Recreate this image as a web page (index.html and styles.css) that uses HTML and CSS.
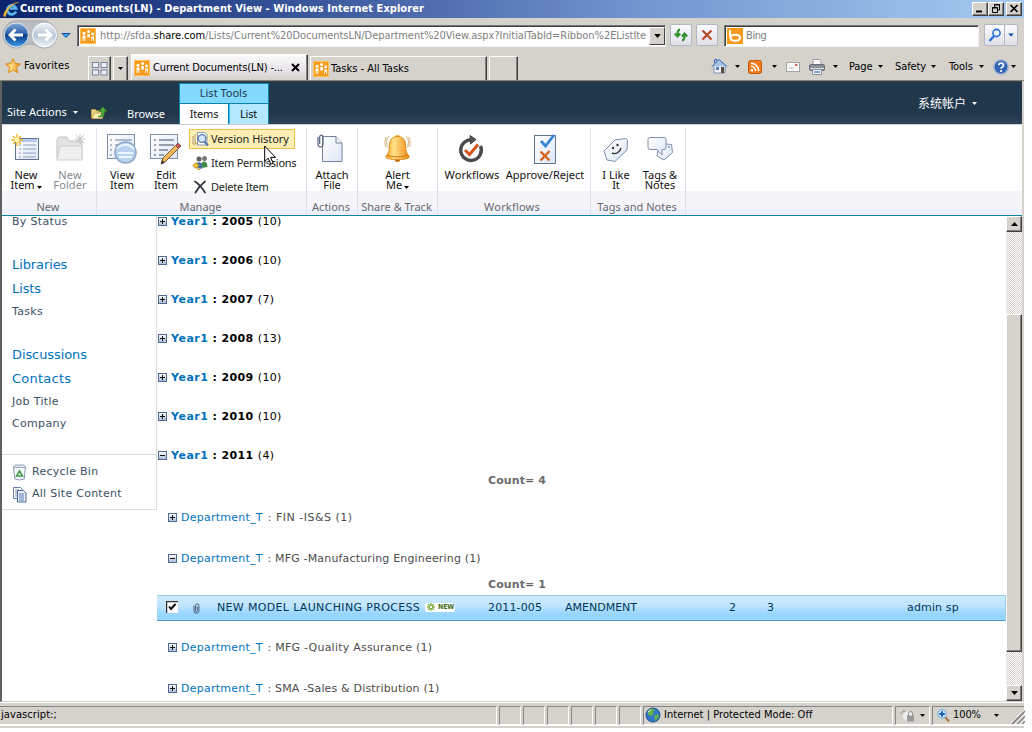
FILE: index.html
```html
<!DOCTYPE html>
<html lang="en">
<head>
<meta charset="utf-8">
<title>Current Documents(LN) - Department View</title>
<link rel="stylesheet" href="styles.css">
</head>
<body>
<svg class="defs" width="0" height="0" aria-hidden="true">
  <defs>
    <linearGradient id="blue" x1="0" y1="0" x2="0" y2="1"><stop offset="0" stop-color="#7fa8d8"/><stop offset=".45" stop-color="#2e5fa8"/><stop offset=".5" stop-color="#0b3a85"/><stop offset="1" stop-color="#3f9be8"/></linearGradient>
    <linearGradient id="pale" x1="0" y1="0" x2="0" y2="1"><stop offset="0" stop-color="#f2f5f9"/><stop offset=".5" stop-color="#b9c6d6"/><stop offset="1" stop-color="#eef3f8"/></linearGradient>
    <linearGradient id="gold" x1="0" y1="0" x2="1" y2="0"><stop offset="0" stop-color="#f3a01c"/><stop offset=".35" stop-color="#ffe08a"/><stop offset="1" stop-color="#ee8a10"/></linearGradient>
    <linearGradient id="sheet" x1="0" y1="0" x2="1" y2="1"><stop offset="0" stop-color="#fff"/><stop offset="1" stop-color="#dce6f6"/></linearGradient>
    <linearGradient id="box" x1="0" y1="0" x2="0" y2="1"><stop offset="0" stop-color="#fff"/><stop offset="1" stop-color="#a9b9d6"/></linearGradient>
    <symbol id="site" viewBox="0 0 16 16"><rect width="16" height="16" rx="1.5" fill="#f59a1b"/><rect x=".5" y=".5" width="15" height="15" rx="1" fill="none" stroke="#ffc05a"/><g fill="#fff"><circle cx="8.600" cy="3.500" r="1.500"/><circle cx="4" cy="5.300" r="1.500"/><circle cx="12.600" cy="6" r="1.400"/><path d="M2.500 7.500h3V13h-3zM7.300 6h2.600v3.500H7.300zM11.300 8.500h2.700V13h-2.700z"/></g><path d="M4 10v4M12.600 10.500v3.500M6.500 9.500v4h4v-4" stroke="#f59a1b" fill="none"/></symbol>
    <symbol id="plus" viewBox="0 0 9 9"><rect x=".5" y=".5" width="8" height="8" fill="url(#box)" stroke="#50698f"/><path d="M2 4.500h5M4.500 2v5" stroke="#111"/></symbol>
    <symbol id="minus" viewBox="0 0 9 9"><rect x=".5" y=".5" width="8" height="8" fill="url(#box)" stroke="#50698f"/><path d="M2 4.500h5" stroke="#111"/></symbol>
    <symbol id="down" viewBox="0 0 5 3"><path d="M0 0h5L2.500 3z" fill="currentColor"/></symbol>
    <symbol id="clip" viewBox="0 0 7 11"><path d="M1 2.500v5.300a2.400 2.400 0 0 0 4.900 0V2.600a1.700 1.700 0 0 0-3.400 0v5a.9.9 0 0 0 1.800 0V3.500" fill="none" stroke="#4a5a78"/></symbol>
  </defs>
</svg>

<div class="window">
  <header class="titlebar">
    <svg class="ie" width="17" height="17" viewBox="0 0 17 17"><path d="M13 10.500a4.500 4.500 0 1 1 .1-3H6.500" fill="none" stroke="#59b6f5" stroke-width="2.600"/><path d="M1 15.500C-1 12 8 1 15.500 1.500c-4 0-12 6-13 14z" fill="#f6c445" stroke="#e7a617" stroke-width=".5"/></svg>
    <h1 class="title">Current Documents(LN) - Department View - Windows Internet Explorer</h1>
    <div class="winbtns">
      <span class="wb"><svg width="10" height="9"><path d="M1 7.500h6" stroke="#000" stroke-width="2"/></svg></span>
      <span class="wb"><svg width="10" height="9"><path d="M3.500 3V.5h5V6H7M3 1h6" fill="none" stroke="#000"/><path d="M1.500 3.500h5v5h-5zM1 4h6" fill="none" stroke="#000"/></svg></span>
      <span class="wb wb-close"><svg width="10" height="9"><path d="M1.500 1l7 7M8.500 1l-7 7" stroke="#000" stroke-width="1.700"/></svg></span>
    </div>
  </header>

  <div class="navrow">
    <svg class="backfwd" width="74" height="30" viewBox="0 0 74 30">
      <path d="M15 1h27c8 0 14 7 14 14s-5 13-13 13c-6 0-7-4-14-4s-8 4-14 4C8 28 2 22 2 15S8 1 15 1z" fill="#b9bcc2" stroke="#a4a7ad"/>
      <circle cx="15.300" cy="15" r="12" fill="url(#blue)" stroke="#dfe7f2"/><path d="M22 15H9.500M14.500 9.500L9 15l5.500 5.500" fill="none" stroke="#fff" stroke-width="2.800"/>
      <circle cx="43.500" cy="15" r="12" fill="url(#pale)" stroke="#fff"/><path d="M37 15h12.500M44.500 9.500L50 15l-5.500 5.500" fill="none" stroke="#fff" stroke-width="2.800"/>
      <path d="M61 13.500h8l-4 4z" fill="#3aa2ea" stroke="#1552a0"/>
    </svg>
    <div class="address sunk">
      <svg width="16" height="16"><use href="#site"/></svg>
      <span class="url">http://sfda.<b>share.com</b>/Lists/Current%20DocumentsLN/Department%20View.aspx?InitialTabId=Ribbon%2EListIte</span>
      <span class="combo"><svg width="7" height="4" viewBox="0 0 5 3"><use href="#down"/></svg></span>
    </div>
    <span class="sqbtn refresh"><svg width="16" height="16" viewBox="0 0 16 16"><path d="M7 2.500C4.500 3 4.500 5 4.500 8M1.800 6.500l2.700 3 2.700-3M9 13.500c2.500-.5 2.500-2.500 2.500-5.500M8.800 9.500l2.700-3 2.700 3" fill="none" stroke="#2f8f2b" stroke-width="2"/></svg></span>
    <span class="sqbtn stop"><svg width="12" height="12" viewBox="0 0 12 12"><path d="M1.500 1.500l9 9M10.500 1.500l-9 9" stroke="#b8472a" stroke-width="2.200"/></svg></span>
    <div class="search sunk">
      <svg width="16" height="16" viewBox="0 0 16 16"><rect width="16" height="16" fill="#f79a1c"/><path d="M3 2v6.500M3.500 9.800c0-1.800 2-3 4.500-3s5 1 5 3-2.400 3-5 3-4.500-1.200-4.500-3z" fill="none" stroke="#fff" stroke-width="2"/></svg>
      <span>Bing</span>
    </div>
    <span class="sqbtn go"><svg width="14" height="14" viewBox="0 0 14 14"><circle cx="8.500" cy="5" r="3.600" fill="#e4f1ff" stroke="#2f6fd8" stroke-width="1.600"/><path d="M6 8l-4.500 5" stroke="#2f6fd8" stroke-width="2.400"/></svg></span>
    <span class="sqbtn godown"><svg width="6" height="4" viewBox="0 0 5 3"><use href="#down"/></svg></span>
  </div>

  <div class="tabrow">
    <div class="fav"><svg width="16" height="16" viewBox="0 0 16 16"><path d="M8 .8l2.100 4.700 5.200.5-3.900 3.500 1.200 5.200L8 12l-4.600 2.700 1.200-5.200L.7 6l5.200-.5z" fill="url(#gold)" stroke="#d98a12"/></svg><span>Favorites</span></div>
    <span class="raised quick"><svg width="16" height="14" viewBox="0 0 16 14"><g fill="#e9edf6" stroke="#7a859e"><rect x=".5" y=".5" width="6" height="5"/><rect x="9" y=".5" width="6" height="5"/><rect x=".5" y="8" width="6" height="5"/><rect x="9" y="8" width="6" height="5"/></g></svg></span>
    <span class="raised quickdown"><svg width="5" height="3"><use href="#down"/></svg></span>
    <div class="raised tab active"><svg width="16" height="16"><use href="#site"/></svg><span class="t">Current Documents(LN) -...</span><svg class="x" width="9" height="9"><path d="M1 1l7 7M8 1L1 8" stroke="#000" stroke-width="2"/></svg></div>
    <div class="raised tab second"><svg width="16" height="16"><use href="#site"/></svg><span class="t">Tasks - All Tasks</span></div>
    <div class="raised newtab"></div>
    <div class="commands">
      <svg width="17" height="17" viewBox="0 0 17 17"><path d="M3 7.500V15h11V7.500" fill="#eef2f8" stroke="#7b8fb0"/><path d="M1 8.500l7-7 8 7M3.500 5V1.500H6V3" fill="#a9c2ea" stroke="#3b63a8"/><path d="M5 9h3v3H5z" fill="#4f7fc8"/><path d="M10 9h3v6h-3z" fill="#5a4b3c"/></svg>
      <svg class="ar a1" width="5" height="3"><use href="#down"/></svg>
      <svg class="rss" width="14" height="14" viewBox="0 0 14 14"><rect x=".5" y=".5" width="13" height="13" rx="2" fill="#ef7d1d" stroke="#c65a0a"/><circle cx="4" cy="10.300" r="1.300" fill="#fff"/><path d="M3 6.300a4.700 4.700 0 0 1 4.700 4.700M3 3.300a7.700 7.700 0 0 1 7.700 7.700" fill="none" stroke="#fff" stroke-width="1.500"/></svg>
      <svg class="ar a4" width="5" height="3"><use href="#down"/></svg>
      <svg class="mail" width="14" height="10" viewBox="0 0 14 10"><rect x=".5" y=".5" width="13" height="9" fill="#f7f7f7" stroke="#a5a5a5"/><path d="M9 2h2.500v2H9z" fill="#c66"/><path d="M2.500 6h5" stroke="#bbb"/></svg>
      <svg class="print" width="16" height="16" viewBox="0 0 16 16"><path d="M4 6V.5h6l2 2V6" fill="#fff" stroke="#999"/><rect x=".5" y="5.500" width="15" height="6" rx="1.500" fill="#8b8f97" stroke="#6a6d74"/><path d="M1 9.500h14" stroke="#d9dce2"/><path d="M3.500 10.500h9v5h-9z" fill="#f2f5fa" stroke="#8a8d94"/><path d="M5 12h6v2H5z" fill="#7fa2d8"/></svg>
      <svg class="ar a2" width="5" height="3"><use href="#down"/></svg>
      <span class="cmd cmd-page">Page</span><svg class="ar" width="5" height="3"><use href="#down"/></svg>
      <span class="cmd safety">Safety</span><svg class="ar" width="5" height="3"><use href="#down"/></svg>
      <span class="cmd tools">Tools</span><svg class="ar" width="5" height="3"><use href="#down"/></svg>
      <svg class="help" width="16" height="16" viewBox="0 0 16 16"><circle cx="8" cy="8" r="7" fill="#2f62b5" stroke="#93a9cf" stroke-width="1.500"/><path d="M5.700 6.300c0-3 4.800-3 4.800 0 0 1.700-2.400 1.700-2.400 3.500M8.100 11v2" fill="none" stroke="#fff" stroke-width="1.700"/></svg><svg class="ar a3" width="5" height="3"><use href="#down"/></svg>
    </div>
  </div>

  <div class="page">
    <div class="sptop">
      <span class="siteactions">Site Actions</span><svg class="ar" width="5" height="3"><use href="#down"/></svg>
      <svg class="upfolder" width="16" height="15" viewBox="0 0 16 15"><path d="M.5 13V4.500h4l1 1.500h6V13z" fill="#e9d58a" stroke="#b79a45"/><path d="M1 13.500L3.500 8H13l-2 5.500z" fill="#fbf0b8" stroke="#c2a654"/><path d="M7 11.500c3 0 4-2 3.700-5H8.300L12 1.800l3.600 4.700h-2.300c.2 4-2 6.500-6.300 5z" fill="#4fae3e" stroke="#2c7d22" stroke-width=".8"/></svg>
      <span class="browse">Browse</span>
      <div class="context"><div class="ctitle">List Tools</div><div class="ctabs"><span class="ct on">Items</span><span class="ct off">List</span></div></div>
      <span class="user">系统帐户</span><svg class="ar userar" width="5" height="3"><use href="#down"/></svg>
    </div>

    <div class="ribbon">
      <section class="group g-new">
        <div class="btns">
          <div class="big"><svg width="32" height="32" viewBox="0 0 32 32"><rect x="5.500" y="5.500" width="23" height="21" fill="url(#sheet)" stroke="#62758f"/><path d="M8 7.500h19" stroke="#b7c9e6" stroke-width="3"/><path d="M9 12h2M9 16h2M9 20h2M9 24h2M13 12h13M13 16h13M13 20h13M13 24h13" stroke="#8fa0bc"/><path d="M7 1v12M1 7h12M3 3l8 8M11 3l-8 8" stroke="#f3b529" stroke-width="1.500"/><circle cx="7" cy="7" r="2.400" fill="#fff3a8"/></svg><span>New<br>Item <svg class="ar" width="5" height="3"><use href="#down"/></svg></span></div>
          <div class="big dim"><svg width="32" height="32" viewBox="0 0 32 32"><path d="M3 26V7l2-3h8l2 4h13v18z" fill="#e3e3e5" stroke="#c3c3c6"/><path d="M3 27l3-14h22v14z" fill="#efeff0" stroke="#cfcfd2"/><path d="M26 1v10M21 6h10M22 2l8 8M30 2l-8 8" stroke="#c2c2c2"/></svg><span>New<br>Folder</span></div>
        </div><h2>New</h2>
      </section>
      <section class="group g-manage">
        <div class="btns">
          <div class="big"><svg width="32" height="32" viewBox="0 0 32 32"><rect x="1.500" y="1.500" width="27" height="24" fill="url(#sheet)" stroke="#8191a9"/><path d="M4 7h2M4 12h2M4 17h2M4 22h2M9 7h17M9 12h17M9 17h10M9 22h10" stroke="#6b7f9e"/><circle cx="19.500" cy="19.500" r="10.500" fill="#b9d3ee" stroke="#8fa6c4" stroke-width="1.500"/><path d="M11 16c3-5 12-6 17 0M12 20h15M13 24h13" stroke="#edf5fd" stroke-width="2" fill="none"/></svg><span>View<br>Item</span></div>
          <div class="big"><svg width="32" height="32" viewBox="0 0 32 32"><rect x=".5" y="1.500" width="27" height="24" fill="url(#sheet)" stroke="#8191a9"/><path d="M4 7h2M4 12h2M4 17h2M4 22h2M9 7h15M9 12h15M9 17h9M9 22h5" stroke="#3f4d66"/><path d="M11 31l2-6 13-13 3 3-13 13z" fill="#f2b75a" stroke="#7d5a2c"/><path d="M25.500 12.500l2.500-2.500 3 3-2.500 2.500z" fill="#c9584c" stroke="#7d5a5c"/><path d="M11 31l1-4 3 3z" fill="#333"/></svg><span>Edit<br>Item</span></div>
          <div class="smalls">
            <div class="small hot"><svg width="17" height="16" viewBox="0 0 17 16"><path d="M1 5v8h3M3 3v9h3" fill="#fff6dd" stroke="#b89a5a"/><path d="M5.500 1.500h7l2.500 2V14H5.500z" fill="#fff" stroke="#8a97ad"/><circle cx="10" cy="7.500" r="3.800" fill="#d3e6f9" stroke="#5978a8" stroke-width="1.300"/><path d="M12.500 10.500l3.500 4" stroke="#5978a8" stroke-width="2"/></svg><span>Version History</span></div>
            <div class="small tight"><svg width="17" height="16" viewBox="0 0 17 16"><circle cx="7" cy="4" r="2.500" fill="#5f5f5f"/><circle cx="12.500" cy="3.500" r="2.500" fill="#7c7c7c"/><path d="M3.500 12c0-6 6-6 6.500-2v4z" fill="#3e6db5"/><path d="M9.500 13V8c3-3 6-1 6 4z" fill="#3f8a48"/><path d="M1 10.500l3-3 3 3-3 3zM5 12l3 3M7 13l-1.500 2" fill="#f6c945" stroke="#b98310"/></svg><span>Item Permissions</span></div>
            <div class="small tight"><svg width="17" height="16" viewBox="0 0 17 16"><path d="M3 2.500c3 2 7 6 10 11M13 2.500c-4 3-7 6.500-9.500 11" fill="none" stroke="#333a45" stroke-width="1.800" stroke-linecap="round"/></svg><span>Delete Item</span></div>
          </div>
        </div><h2>Manage</h2>
      </section>
      <section class="group g-actions"><div class="btns"><div class="big"><svg width="32" height="32" viewBox="0 0 32 32"><path d="M6.500 3.500H20l6 6.500v18.500H6.500z" fill="url(#sheet)" stroke="#74839b"/><path d="M20 3.500V10h6" fill="#edf2fa" stroke="#74839b"/><path d="M2 4v7.500a2.500 2.500 0 0 0 5 0V3.500a1.700 1.700 0 0 0-3.300 0V11" fill="none" stroke="#56657e" stroke-width="1.200"/></svg><span>Attach<br>File</span></div></div><h2>Actions</h2></section>
      <section class="group g-share"><div class="btns"><div class="big"><svg width="32" height="32" viewBox="0 0 32 32"><path d="M7 3c-3 3-3 8-1 12M4.500 4c-2 3-2 7-.5 10M24 3c3 3 3 8 1 12M26.500 4c2 3 2 7 .5 10" fill="none" stroke="#d4b276"/><circle cx="15.500" cy="26" r="3" fill="#c87512"/><circle cx="15.500" cy="4" r="2.300" fill="#f5b030"/><path d="M15.500 3.500c-6 0-8 4-8 9 0 5-1 8-4 11.500 2 3.500 22 3.500 24 0-3-3.500-4-6.500-4-11.500 0-5-2-9-8-9z" fill="url(#gold)" stroke="#d98b18"/><path d="M5 22c4 2.500 17 2.500 21 0" stroke="#c97b12" fill="none"/></svg><span>Alert<br>Me <svg class="ar" width="5" height="3"><use href="#down"/></svg></span></div></div><h2>Share &amp; Track</h2></section>
      <section class="group g-work"><div class="btns">
        <div class="big"><svg width="32" height="32" viewBox="0 0 32 32"><path d="M17 7a10.300 10.300 0 1 0 7.500 6" fill="none" stroke="#4a4a4c" stroke-width="3.400"/><path d="M14 2.500L20 6.500l-5.500 4.500z" fill="#555" stroke="#444"/><path d="M9 17l4.500 4.500L22 11.500" fill="none" stroke="#d7541c" stroke-width="3"/></svg><span>Workflows</span></div>
        <div class="big"><svg width="32" height="32" viewBox="0 0 32 32"><rect x="5.500" y="2.500" width="21" height="28" fill="url(#sheet)" stroke="#62758f"/><path d="M12 8l4.500 5L25 2" fill="none" stroke="#3d86d6" stroke-width="2.800"/><path d="M11.500 18.500l9 9M20.500 18l-9 9.500" stroke="#d86020" stroke-width="2.400"/></svg><span>Approve/Reject</span></div>
      </div><h2>Workflows</h2></section>
      <section class="group g-tags"><div class="btns">
        <div class="big"><svg width="32" height="32" viewBox="0 0 32 32"><path d="M4 18L15 7l10.500-1.500 2 1.500-.5 10L15 28.500 7 27z" fill="url(#sheet)" stroke="#7f8fae"/><circle cx="13" cy="15" r="1.200" fill="#333"/><circle cx="17.500" cy="12" r="1.200" fill="#333"/><path d="M12 20c4 2 8-1 9-5" fill="none" stroke="#333" stroke-width="1.400"/></svg><span>I Like<br>It</span></div>
        <div class="big"><svg width="32" height="32" viewBox="0 0 32 32"><path d="M14 15l8-4 5.500.5 1 8L20 27l-7-4z" fill="url(#sheet)" stroke="#7f8fae"/><path d="M6 4.500h14q2 0 2 2v8q0 2-2 2h-2V22l-5-5.500H6q-2 0-2-2v-8q0-2 2-2z" fill="url(#sheet)" stroke="#8291ae"/><circle cx="25" cy="14" r="1" fill="#7f8fae"/></svg><span>Tags &amp;<br>Notes</span></div>
      </div><h2>Tags and Notes</h2></section>
      <div class="groupfill"></div>
      <svg class="cursor" width="13" height="21" viewBox="0 0 13 21"><path d="M.7 1v15.500l3.500-3.300 2.600 6 2.400-1-2.600-5.800h4.900z" fill="#fff" stroke="#000"/></svg>
    </div>

    <div class="body">
      <aside class="side">
        <nav class="links">
          <a class="item">By Status</a>
          <a class="head gap">Libraries</a>
          <a class="head">Lists</a>
          <a class="item">Tasks</a>
          <a class="head gap2">Discussions</a>
          <a class="head wide">Contacts</a>
          <a class="item">Job Title</a>
          <a class="item">Company</a>
        </nav>
        <div class="tools2">
          <a class="tool"><svg width="15" height="17" viewBox="0 0 15 17"><path d="M1.500 3h12l-1.300 12q-4.700 2-9.400 0z" fill="#f4f7fb" stroke="#8b9bb5"/><path d="M1 3.500L3 1h9l2 2.500z" fill="#dfe6f0" stroke="#9aa7bd"/><path d="M7.500 7l3 5h-6z" fill="none" stroke="#3e9a42" stroke-width="1.500"/></svg><span>Recycle Bin</span></a>
          <a class="tool"><svg width="15" height="17" viewBox="0 0 15 17"><path d="M1.500 1.500h7l2 2v9h-9z" fill="#fff" stroke="#667ea8"/><path d="M3 4h4M3 6h3M3 8h3M3 10h3" stroke="#7f95bb"/><path d="M5.500 4.500h6l2.500 2.500v9H5.500z" fill="#e7effb" stroke="#4d6796"/><path d="M7 8h5M7 10h5M7 12h5M7 14h5" stroke="#5c7db5"/></svg><span>All Site Content</span></a>
        </div>
      </aside>
      <main class="list">
        <div class="year"><svg width="9" height="9"><use href="#plus"/></svg><span><a>Year1</a> : 2005 <i>(10)</i></span></div>
        <div class="year"><svg width="9" height="9"><use href="#plus"/></svg><span><a>Year1</a> : 2006 <i>(10)</i></span></div>
        <div class="year"><svg width="9" height="9"><use href="#plus"/></svg><span><a>Year1</a> : 2007 <i>(7)</i></span></div>
        <div class="year"><svg width="9" height="9"><use href="#plus"/></svg><span><a>Year1</a> : 2008 <i>(13)</i></span></div>
        <div class="year"><svg width="9" height="9"><use href="#plus"/></svg><span><a>Year1</a> : 2009 <i>(10)</i></span></div>
        <div class="year"><svg width="9" height="9"><use href="#plus"/></svg><span><a>Year1</a> : 2010 <i>(10)</i></span></div>
        <div class="year"><svg width="9" height="9"><use href="#minus"/></svg><span><a>Year1</a> : 2011 <i>(4)</i></span></div>
        <div class="count">Count= 4</div>
        <div class="dept first"><svg width="9" height="9"><use href="#plus"/></svg><span><a>Department_T</a> : FIN -IS&amp;S (1)</span></div>
        <div class="dept"><svg width="9" height="9"><use href="#minus"/></svg><span><a>Department_T</a> : MFG -Manufacturing Engineering (1)</span></div>
        <div class="count">Count= 1</div>
        <div class="row">
          <svg class="check" width="12" height="12"><rect width="12" height="12" fill="#fff"/><path d="M.5 12V.5H12" fill="none" stroke="#333" stroke-width="1.500"/><path d="M3 5.500l2 2.500 4.500-5" fill="none" stroke="#000" stroke-width="1.900"/></svg>
          <svg class="att" width="7" height="11"><use href="#clip"/></svg>
          <span class="c-title">NEW MODEL LAUNCHING PROCESS</span>
          <span class="new"><svg width="8" height="8"><path d="M0 4h8M4 0v8M1 1l6 6M7 1L1 7" stroke="#7cb342" stroke-width="1.400"/><path d="M3 3h2v2H3z" fill="#fff"/></svg>NEW</span>
          <span class="c-no">2011-005</span>
          <span class="c-type">AMENDMENT</span>
          <span class="c-a">2</span>
          <span class="c-b">3</span>
          <span class="c-user">admin sp</span>
        </div>
        <div class="dept after"><svg width="9" height="9"><use href="#plus"/></svg><span><a>Department_T</a> : MFG -Quality Assurance (1)</span></div>
        <div class="dept"><svg width="9" height="9"><use href="#plus"/></svg><span><a>Department_T</a> : SMA -Sales &amp; Distribution (1)</span></div>
      </main>
      <div class="scroll">
        <span class="raised sb"><svg width="7" height="4"><path d="M0 4h7L3.500 0z"/></svg></span>
        <span class="raised thumb"></span>
        <span class="raised sb bottom"><svg width="7" height="4"><path d="M0 0h7L3.500 4z"/></svg></span>
      </div>
    </div>
  </div>

  <footer class="status">
    <span class="cell msg">javascript:;</span>
    <span class="cell s"></span><span class="cell s"></span><span class="cell s"></span><span class="cell s"></span><span class="cell s"></span><span class="cell s"></span>
    <span class="cell zone"><svg width="16" height="16" viewBox="0 0 16 16"><circle cx="8" cy="8" r="7" fill="#2f77c9" stroke="#1c4c8c"/><path d="M3 4c2-3 6-3 7-1L8 5l1 2-3 2-3-1zM9 9l4-2 1 3-4 4z" fill="#5fb04d"/><path d="M3 5l3-2" stroke="#dff0ff"/></svg><span>Internet | Protected Mode: Off</span></span>
    <span class="cell prot"><svg width="16" height="14" viewBox="0 0 16 14"><path d="M1 6l4-4v2c4-1 6 0 7 3" fill="#c9c9c9" stroke="#a2a2a2"/><circle cx="9" cy="8" r="5" fill="#efefef"/><rect x="8" y="7.500" width="7" height="6" fill="#999"/><path d="M9.500 8V5.500a2 2 0 0 1 4 0V8" fill="none" stroke="#888"/></svg><svg class="ar" width="5" height="3"><use href="#down"/></svg></span>
    <span class="cell zoom"><svg width="13" height="13" viewBox="0 0 13 13"><circle cx="5" cy="5" r="4.300" fill="#d6ebff" stroke="#6d9fd8"/><path d="M5 2.200v5.600M2.200 5h5.600" stroke="#1560c0" stroke-width="2"/><path d="M8.500 8.500l3.500 4" stroke="#a8763e" stroke-width="2"/></svg><span>100%</span><svg class="ar" width="5" height="3"><use href="#down"/></svg><svg class="grip" width="14" height="14"><path d="M1 14L14 1M6 14l8-8M11 14l3-3" stroke="#808080" stroke-width="1.600"/><path d="M0 13L13 0M4.500 14L14 4.500M9.500 14L14 9.500" stroke="#fff"/></svg></span>
  </footer>
</div>
</body>
</html>
```

FILE: styles.css
```css
* { box-sizing: border-box; }
body { margin: 0; background: #fff; overflow: hidden; }
svg { display: block; flex: none; }
.defs { position: absolute; }
.window { width: 1024px; height: 728px; display: flex; flex-direction: column; background: #d5d2cc; color: #000; font: 11px/14px "DejaVu Sans Condensed", "DejaVu Sans", sans-serif; letter-spacing: 0; white-space: nowrap; }
.window span, .window a { flex: none; }
.ar { color: #000; }

.titlebar { height: 18px; display: flex; align-items: center; padding: 0 2px 0 3px; background: linear-gradient(90deg, #0b246b 0%, #3d5a9f 32%, #7394ce 62%, #a6caf0 100%); }
.title { margin: 0; flex: 1; color: #fff; font-size: 11px; font-weight: bold; letter-spacing: 0.04px; }
.winbtns { display: flex; margin-top: -1px; }
.wb { width: 16px; height: 14px; display: grid; place-items: center; background: #d5d2cc; border: 1px solid; border-color: #fff #404040 #404040 #fff; box-shadow: inset -1px -1px #808080; }
.wb-close { margin-left: 2px; }

.navrow { height: 34px; display: flex; align-items: center; }
.backfwd { margin: 0 2px 0 1px; }
.sunk { height: 22px; display: flex; align-items: center; background: #fff; border: 1px solid; border-color: #777 #f4f2ee #f4f2ee #777; box-shadow: inset 1px 1px #404040; color: #808080; }
.address { width: 589px; margin-top: 1px; padding-left: 2px; margin-right: 4px; }
.url { width: 552px; margin-left: 4px; letter-spacing: -0.05px; overflow: hidden; }
.url b { font-weight: normal; color: #000; }
.combo { width: 16px; height: 18px; display: grid; place-items: center; background: #d5d2cc; border: 1px solid; border-color: #fff #404040 #404040 #fff; color: #000; margin-left: -3px; }
.sqbtn { height: 22px; width: 22px; display: grid; place-items: center; border: 1px solid #b3b7c4; border-radius: 2px; background: linear-gradient(#fbfbfd, #dfe1ea); }
.refresh { margin-right: 4px; }
.search { width: 255px; margin: 1px 5px 0 6px; padding-left: 2px; gap: 3px; letter-spacing: -0.4px; }
.go { border-radius: 2px 0 0 2px; width: 21px; }
.godown { width: 13px; border-left: 0; color: #1b4fae; }

.tabrow { height: 29px; display: flex; align-items: flex-end; border-bottom: 1px solid #808080; }
.fav { width: 84px; display: flex; align-items: center; gap: 3px; padding-left: 5px; height: 28px; letter-spacing: 0.1px; }
.raised { background: #d5d2cc; border: 1px solid; border-color: #fff #404040 #404040 #fff; box-shadow: inset -1px -1px #808080; }
.tabrow .raised { border-bottom: 0; box-shadow: inset -1px 0 #808080; }
.quick { width: 23px; height: 24px; margin-left: 4px; display: grid; place-items: center; }
.quickdown { width: 15px; height: 24px; margin: 0 3px 0 2px; display: grid; place-items: center; }
.tab { display: flex; align-items: center; padding-left: 2px; }
.tab .t { margin-left: 3px; }
.tab.active { width: 177px; height: 26px; background: linear-gradient(#fbfafa, #e8e4ea 60%, #d5d2cc); }
.tab.active .t { width: 138px; letter-spacing: -0.14px; }
.tab.second { width: 177px; height: 24px; margin-left: 2px; }
.tab.second .t { margin-left: 2px; letter-spacing: 0; }
.newtab { width: 29px; height: 24px; margin-left: 2px; }
.commands { flex: 1; height: 27px; display: flex; align-items: center; padding-left: 193px; }
.a1 { margin-left: 7px; }
.rss { margin-left: 8px; }
.a4 { margin-left: 10px; }
.mail, .print, .help { margin-left: 9px; }
.a2 { margin-left: 8px; }
.cmd { margin-left: 11px; letter-spacing: -0.1px; }
.cmd-page { width: 29px; }
.safety { width: 36px; margin-left: 12px; }
.tools { width: 30px; margin-left: 13px; }
.a3 { margin-left: 2px; }

.page { width: 1024px; height: 621px; border-left: 2px solid #606060; border-right: 2px solid #d5d2cc; border-bottom: 1px solid #d5d2cc; background: #fff; }
.sptop { height: 43px; padding-left: 5px; display: flex; background: linear-gradient(#21374c 0 75%, #304258 100%); border-top: 1px solid #404040; color: #fff; font-family: "Noto Sans", sans-serif; }
.siteactions { margin-top: 23px; width: 66px; }
.sptop .ar { color: #fff; margin-top: 29px; }
.upfolder { margin: 23px 0 0 13px; }
.browse { margin: 25px 14px 0 20px; width: 38px; }
.context { width: 90px; margin-top: 1px; height: 41px; border: 1px solid #0b83ab; border-bottom: 0; background: #84d9ff; color: #21374c; display: flex; flex-direction: column; }
.ctitle { height: 19px; text-align: center; line-height: 17px; padding-right: 1px; }
.ctabs { flex: 1; display: flex; border-top: 1px solid #0b83ab; }
.ct { text-align: center; line-height: 20px; color: #111; letter-spacing: -0.2px; }
.on { width: 48px; background: #fff; }
.off { width: 40px; background: #b4e8ff; border-left: 1px solid #0b83ab; box-shadow: inset 1px 0 #35bdf0; }
.user { margin: 13px 0 0 649px; font: 12px/16px "Noto Sans CJK SC", sans-serif; width: 50px; }
.sptop .userar { margin: 20px 0 0 4px; }

.ribbon { position: relative; height: 92px; border-top: 1px solid #c9d0dc; border-bottom: 1px solid #0b83ab; display: flex; padding-top: 3px; font-family: "Noto Sans", sans-serif; background: linear-gradient(#fff 66px, #f5f4f8 66px 84px, #edf0f8 84px); }
.group { border-right: 1px solid #dfe2ee; display: flex; flex-direction: column; }
.btns { height: 64px; display: flex; }
.group h2 { margin: 8px 0 0; padding-right: 2px; text-align: center; font-size: 11px; font-weight: normal; line-height: 14px; color: #66696f; }
.g-new { width: 95px; } .g-manage { width: 210px; } .g-actions { width: 51px; } .g-share { width: 80px; } .g-work { width: 153px; } .g-tags { width: 95px; }
.group.g-work h2 { padding-right: 4px; letter-spacing: 0.2px; }
.groupfill { flex: 1; }
.big { width: 44px; display: flex; flex-direction: column; align-items: center; padding-top: 5px; text-align: center; line-height: 10px; color: #111; }
.big > svg { margin-bottom: 5px; }
.big span .ar { display: inline-block; vertical-align: 0; margin-left: -1px; }
.big.dim { color: #858a91; letter-spacing: 0.1px; }
.g-new .btns { padding-left: 2px; }
.g-manage .btns { padding-left: 3px; }
.g-actions .big, .g-share .big { width: 100%; }
.g-work .btns { padding-left: 4px; } .g-work .big { width: 60px; } .g-work .big + .big { width: 86px; }
.g-work .big:first-child { letter-spacing: 0.1px; }
.g-tags .btns { padding-left: 3px; }
.smalls { display: flex; flex-direction: column; gap: 4px; margin: 1px 0 0 1px; }
.small { height: 20px; flex: none; width: 107px; padding-left: 3px; display: flex; align-items: center; gap: 2px; color: #222; }
.small.hot { width: 106px; background: #fdeeb3; border: 1px solid #f0c04a; padding-left: 2px; letter-spacing: -0.05px; }
.small.tight { letter-spacing: -0.27px; }
.cursor { position: absolute; left: 262px; top: 20px; }

.body { height: 485px; display: flex; overflow: hidden; font-family: "DejaVu Sans", sans-serif; }
.side { width: 155px; height: 294px; border-right: 1px solid #dbddde; border-bottom: 1px solid #dbddde; color: #3b4f65; }
.links { height: 239px; border-bottom: 1px solid #dbddde; padding: 0 0 0 10px; display: flex; flex-direction: column; }
.item { line-height: 22px; margin-top: -5px; margin-bottom: 5px; letter-spacing: 0.32px; }
.head { line-height: 24px; font-size: 13px; color: #0072bc; margin-top: -5px; margin-bottom: 5px; letter-spacing: -0.1px; }
.head.wide { letter-spacing: 0.25px; }
.gap, .gap2 { margin-top: 15px; }
.tools2 { padding: 6px 0 0 10px; }
.tool { display: flex; align-items: center; height: 22px; gap: 5px; letter-spacing: 0.27px; }
.list { width: 849px; color: #4c4c4c; }
.year { height: 39px; display: flex; align-items: center; padding-left: 1px; gap: 4px; font-weight: bold; color: #000; letter-spacing: 0.35px; }
.year:first-child { margin-top: -14px; }
.year a { letter-spacing: 0.5px; }
.year i { font-style: normal; font-weight: normal; }
.list a { color: #0072bc; }
.count { height: 12px; line-height: 12px; padding-left: 331px; font-weight: bold; color: #6c6c6c; letter-spacing: 0.1px; }
.dept { height: 41px; display: flex; align-items: center; padding-left: 11px; gap: 4px; letter-spacing: 0.17px; }
.dept a { letter-spacing: 0.25px; margin-right: 1px; word-spacing: 1px; }
.dept.first { margin-top: 10px; letter-spacing: 0.5px; }
.dept + .count { margin-bottom: 4px; }
.row { height: 26px; display: flex; align-items: center; border: 1px solid #9ccbe8; border-left: 0; border-bottom-color: #4f9bd0; background: linear-gradient(#cdeafd, #bfe5ff 40%, #98d6ff 75%); color: #003759; padding: 0 0 0 9px; letter-spacing: 0.15px; }
.check { margin-top: -2px; }
.att { margin: 0 17px 0 15px; }
.c-title { width: 208px; letter-spacing: 0.34px; }
.new { width: 30px; height: 9px; margin: -2px 33px 0 0; background: #fff; border-radius: 2px; display: flex; align-items: center; gap: 3px; padding-left: 2px; font: bold 7px/9px "DejaVu Sans Condensed", sans-serif; color: #3d6b1e; letter-spacing: -0.1px; }
.c-no { width: 77px; } .c-type { width: 164px; letter-spacing: 0; } .c-a { width: 38px; } .c-b { width: 140px; }
.after { margin-top: 6px; letter-spacing: 0.23px; }
.scroll { width: 16px; display: flex; flex-direction: column; background: repeating-conic-gradient(#d5d2cc 0 25%, #fff 0 50%) 0 0 / 2px 2px; }
.sb { height: 16px; display: grid; place-items: center; }
.thumb { height: 338px; margin-top: 82px; }
.bottom { margin-top: auto; }

.status { height: 26px; display: flex; align-items: center; gap: 2px; border-top: 1px solid #fff; border-bottom: 2px solid #d5d2cc; box-shadow: inset 0 -1px #fff; padding-top: 1px; }
.cell { height: 19px; display: flex; align-items: center; border: 1px solid; border-color: #868686 #fff #fff #868686; }
.msg { width: 497px; border-left: 0; padding-left: 1px; letter-spacing: 0.08px; }
.s { width: 22px; }
.zone { width: 250px; padding-left: 1px; gap: 3px; letter-spacing: 0.03px; }
.prot { width: 35px; padding-left: 3px; gap: 5px; }
.zoom { width: 92px; padding-left: 4px; gap: 3px; border-right: 0; letter-spacing: -0.1px; }
.zoom .ar { margin-left: 10px; }
.grip { margin-left: 9px; margin-top: 4px; }
```
